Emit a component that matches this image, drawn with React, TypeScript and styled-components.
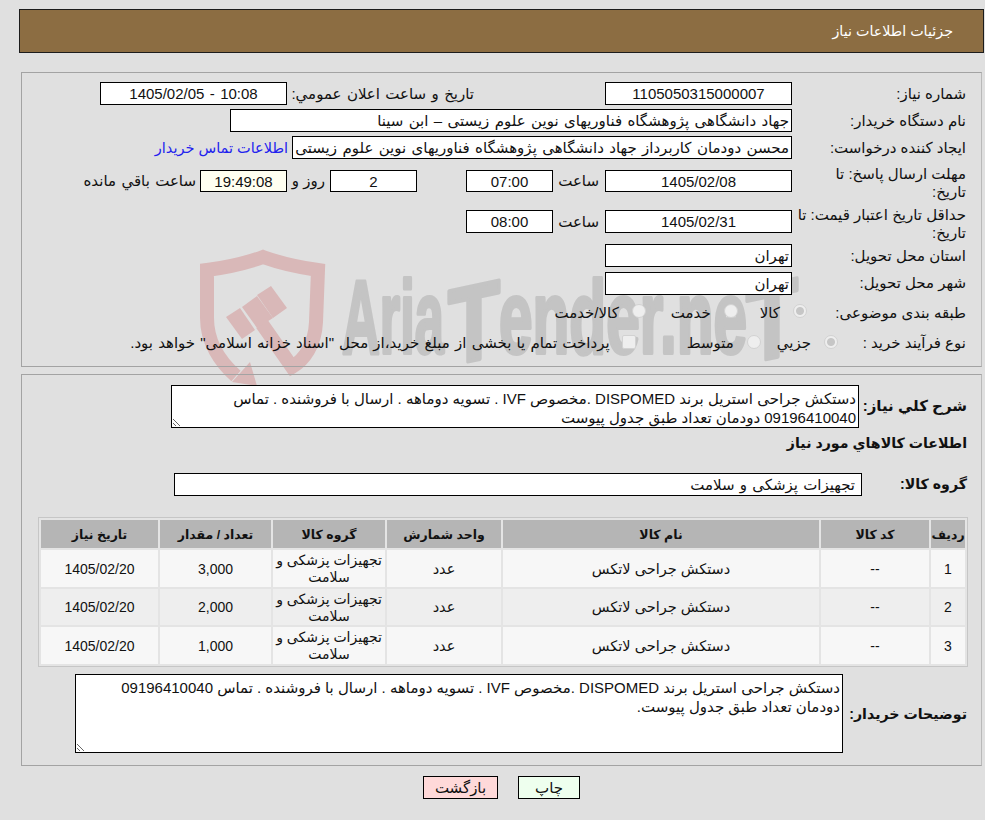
import React from "react";
import styled, { createGlobalStyle } from "styled-components";

const FONT = `"Liberation Sans", "DejaVu Sans", sans-serif`;

const Global = createGlobalStyle`
  html, body { margin: 0; padding: 0; background: #e0e0e0; }
  body { font-family: ${FONT}; font-size: 15px; color: #111; }
`;

const Page = styled.div`
  position: relative;
  width: 985px;
  height: 820px;
  overflow: hidden;
  padding: 9px 1px 0 19px;
  box-sizing: border-box;
  direction: rtl;
`;
const Watermark = styled.svg`
  position: absolute;
  left: 0;
  top: 0;
  pointer-events: none;
`;
const Content = styled.div`
  position: relative;
  z-index: 1;
`;
const Header = styled.h1`
  margin: 0;
  height: 44px;
  box-sizing: border-box;
  border: 1px solid #1c1c1c;
  background: #8c6d42;
  color: #fff;
  font-size: 14.3px;
  font-weight: 400;
  line-height: 43px;
  padding-right: 30px;
`;
const Panel = styled.section<{ $top: number; $height: number; $pt: number }>`
  margin: ${(p) => p.$top}px 2px 0 2px;
  height: ${(p) => p.$height}px;
  box-sizing: border-box;
  border: 1px solid #a3a3a3;
  border-right-color: #b9b9b9;
  padding: ${(p) => p.$pt}px 14px 0 0;
`;
const Row = styled.div<{ $h: number }>`
  display: flex;
  align-items: center;
  height: ${(p) => p.$h}px;
`;
const Label = styled.div<{ $w?: number }>`
  width: ${(p) => p.$w ?? 175}px;
  flex: none;
  line-height: 18px;
  box-sizing: border-box;
  padding: 0 1px 0 6px;
`;
const TwoLineLabel = styled(Label)`
  white-space: nowrap;
  padding-top: 4px;
`;
const Field = styled.div<{ $w: number; $center?: boolean; $cream?: boolean; $mr?: number; $tall?: boolean }>`
  width: ${(p) => p.$w}px;
  height: ${(p) => (p.$tall ? 23 : 22)}px;
  margin-right: ${(p) => p.$mr ?? 0}px;
  flex: none;
  box-sizing: border-box;
  border: 1px solid #000;
  background: ${(p) => (p.$cream ? "#fffff0" : "#fff")};
  line-height: 21px;
  padding: 0 2px;
  text-align: ${(p) => (p.$center ? "center" : "right")};
  white-space: nowrap;
  overflow: hidden;
  word-spacing: 1.2px;
`;
const Ltr = styled.span`
  direction: ltr;
  unicode-bidi: embed;
`;
const Caption = styled.div<{ $w: number; $pr?: number; $tight?: boolean }>`
  width: ${(p) => p.$w}px;
  flex: none;
  box-sizing: border-box;
  padding-right: ${(p) => p.$pr ?? 0}px;
  white-space: nowrap;
  word-spacing: ${(p) => (p.$tight ? 0 : 1.2)}px;
`;
const BuyerLink = styled.a`
  color: #2222ee;
  margin-right: 4px;
  font-size: 14.5px;
  white-space: nowrap;
  text-decoration: none;
`;
const Radio = styled.span<{ $on?: boolean; $gap: number }>`
  width: 14px;
  height: 14px;
  flex: none;
  margin-right: ${(p) => p.$gap}px;
  margin-left: 13px;
  margin-top: -3px;
  box-sizing: border-box;
  border-radius: 50%;
  border: 1px solid #d2d2d2;
  background: ${(p) =>
    p.$on ? "radial-gradient(circle, #c6c6c6 0 3.5px, #eeeeee 4.5px)" : "#eeeeee"};
`;
const Check = styled.span<{ $gap: number }>`
  width: 14px;
  height: 14px;
  flex: none;
  margin-right: ${(p) => p.$gap}px;
  margin-left: 12px;
  margin-top: -3px;
  box-sizing: border-box;
  border-radius: 2px;
  border: 1px solid #d2d2d2;
  background: #eeeeee;
`;
const OptionText = styled.span<{ $spaced?: boolean }>`
  white-space: nowrap;
  word-spacing: ${(p) => (p.$spaced ? 1 : 0)}px;
`;
const BoldLabel = styled.div<{ $w: number; $size?: number }>`
  width: ${(p) => p.$w}px;
  flex: none;
  font-weight: 700;
  font-size: ${(p) => p.$size ?? 14.2}px;
  white-space: nowrap;
`;
const Memo = styled.textarea<{ $w: number; $h: number }>`
  width: ${(p) => p.$w}px;
  height: ${(p) => p.$h}px;
  flex: none;
  box-sizing: border-box;
  border: 1px solid #000;
  border-radius: 0;
  background: #fff;
  color: #111;
  font: 15px/19px ${FONT};
  padding: 3px 2px 0;
  margin: 0;
  direction: rtl;
  resize: both;
  outline: none;
  overflow: hidden;
`;
const SectionTitle = styled.div`
  font-weight: 700;
  font-size: 14.2px;
  height: 29px;
  line-height: 29px;
`;
const GroupBox = styled.div`
  width: 688px;
  height: 23px;
  box-sizing: border-box;
  border: 1px solid #000;
  background: #fff;
  line-height: 21px;
  padding: 0 6px;
  flex: none;
  word-spacing: 1px;
`;
const TableWrap = styled.table`
  margin: 7px -1px 0 0;
  width: 930px;
  table-layout: fixed;
  border-collapse: separate;
  border-spacing: 2px;
  border: 1px solid #c6c6c6;
  background: #e4e4e4;
`;
const HeadCell = styled.th`
  background: #b5b5b5;
  height: 28px;
  padding: 0;
  font-size: 12.5px;
  font-weight: 700;
  text-align: center;
  white-space: nowrap;
`;
const Cell = styled.td<{ $alt: boolean; $h: number; $num?: boolean }>`
  background: ${(p) => (p.$alt ? "#eeeeee" : "#f7f7f7")};
  height: ${(p) => p.$h}px;
  padding: 1px 0 0;
  box-sizing: border-box;
  text-align: center;
  line-height: 17px;
  font-size: ${(p) => (p.$num ? 14 : 14.5)}px;
`;
const BuyerRow = styled.div`
  display: flex;
  align-items: center;
  height: 79px;
  margin-top: 7px;
`;
const Buttons = styled.div`
  display: flex;
  justify-content: center;
  gap: 20px;
  margin-top: 10px;
`;
const Btn = styled.button<{ $bg: string; $w: number }>`
  width: ${(p) => p.$w}px;
  height: 23px;
  box-sizing: border-box;
  border: 1px solid #000;
  border-radius: 0;
  padding: 0;
  background: ${(p) => p.$bg};
  color: #111;
  font: 15px ${FONT};
`;

const WM_GRAY = "#c4c4c4";
const WM_RED = "#d9b8b8";

function WatermarkLogo() {
  return (
    <Watermark width="985" height="820" viewBox="0 0 985 820">
      <path
        d="M236 376 C220 362 207 342 207 318 L207 270 Q238 266 263 257 Q288 266 318 270 L316 322 C315 345 304 360 292 367 L262 324"
        fill="none"
        stroke={WM_RED}
        strokeWidth="14"
      />
      <polygon points="250,362 257,386 232,382" fill={WM_RED} />
      <polygon points="226,317 240,308 255,330 242,339" fill={WM_RED} />
      <polygon points="242,307 257,296 273,318 257,328" fill={WM_RED} />
      <polygon points="257,295 271,286 287,308 273,318" fill={WM_RED} />
      <g
        fill={WM_GRAY}
        stroke={WM_GRAY}
        strokeWidth="4"
        strokeLinejoin="round"
        fontFamily='"Liberation Sans", sans-serif'
        fontWeight="700"
        fontSize="104"
      >
        <text x="342" y="353" textLength="102" lengthAdjust="spacingAndGlyphs" direction="ltr">Aria</text>
        <text x="448" y="356" fontSize="108" textLength="52" lengthAdjust="spacingAndGlyphs" direction="ltr" transform="translate(0 105) skewY(-12)">T</text>
        <text x="499" y="353" textLength="248" lengthAdjust="spacingAndGlyphs" direction="ltr">ender.ne</text>
        <text x="746" y="356" fontSize="108" textLength="52" lengthAdjust="spacingAndGlyphs" direction="ltr" transform="translate(0 166) skewY(-12)">T</text>
      </g>
    </Watermark>
  );
}

const desc =
  "دستكش جراحی استریل برند DISPOMED .مخصوص IVF . تسویه دوماهه . ارسال با فروشنده . تماس 09196410040 دودمان تعداد طبق جدول پیوست";

const columns = [
  { t: "ردیف", w: 34 },
  { t: "کد کالا", w: 108 },
  { t: "نام کالا", w: 316 },
  { t: "واحد شمارش", w: 114 },
  { t: "گروه کالا", w: 112 },
  { t: "تعداد / مقدار", w: 111 },
  { t: "تاریخ نیاز", w: 117 },
];
const rows = [
  { n: "1", q: "3,000", h: 37 },
  { n: "2", q: "2,000", h: 36 },
  { n: "3", q: "1,000", h: 37 },
];

export default function App() {
  return (
    <Page>
      <Global />
      <WatermarkLogo />
      <Content>
        <Header>جزئیات اطلاعات نیاز</Header>
        <Panel $top={19} $height={295} $pt={7}>
          <Row $h={27}>
            <Label>شماره نیاز:</Label>
            <Field $w={187} $center $tall>1105050315000007</Field>
            <Label $w={318}><Caption $w={311} $pr={130}>تاريخ و ساعت اعلان عمومي:</Caption></Label>
            <Field $w={187} $center $tall><Ltr>1405/02/05 - 10:08</Ltr></Field>
          </Row>
          <Row $h={27}>
            <Label>نام دستگاه خریدار:</Label>
            <Field $w={562} $tall>جهاد دانشگاهی پژوهشگاه فناوریهای نوین علوم زیستی – ابن سینا</Field>
          </Row>
          <Row $h={27}>
            <Label>ایجاد کننده درخواست:</Label>
            <Field $w={500} $tall>محسن دودمان کاربرداز جهاد دانشگاهی پژوهشگاه فناوریهای نوین علوم زیستی</Field>
            <BuyerLink>اطلاعات تماس خریدار</BuyerLink>
          </Row>
          <Row $h={40}>
            <TwoLineLabel>مهلت ارسال پاسخ: تا<br />تاریخ:</TwoLineLabel>
            <Field $w={187} $center>1405/02/08</Field>
            <Caption $w={52} $pr={6}>ساعت</Caption>
            <Field $w={87} $center>07:00</Field>
            <Field $w={87} $center $mr={49}>2</Field>
            <Caption $w={43} $pr={5} $tight>روز و</Caption>
            <Field $w={87} $center $cream>19:49:08</Field>
            <Caption $w={120} $pr={4}>ساعت باقي مانده</Caption>
          </Row>
          <Row $h={41}>
            <TwoLineLabel>حداقل تاریخ اعتبار قیمت: تا<br />تاریخ:</TwoLineLabel>
            <Field $w={187} $center $tall>1405/02/31</Field>
            <Caption $w={52} $pr={6}>ساعت</Caption>
            <Field $w={87} $center $tall>08:00</Field>
          </Row>
          <Row $h={27}>
            <Label>استان محل تحویل:</Label>
            <Field $w={187} $tall>تهران</Field>
          </Row>
          <Row $h={28}>
            <Label>شهر محل تحویل:</Label>
            <Field $w={187} $tall>تهران</Field>
          </Row>
          <Row $h={31}>
            <Label $w={160}>طبقه بندی موضوعی:</Label>
            <Radio $on $gap={0} />
            <OptionText>کالا</OptionText>
            <Radio $gap={22} />
            <OptionText>خدمت</OptionText>
            <Radio $gap={25} />
            <OptionText>کالا/خدمت</OptionText>
          </Row>
          <Row $h={30}>
            <Label $w={129}>نوع فرآیند خرید :</Label>
            <Radio $on $gap={0} />
            <OptionText>جزيي</OptionText>
            <Radio $gap={16} />
            <OptionText>متوسط</OptionText>
            <Check $gap={51} />
            <OptionText $spaced>پرداخت تمام یا بخشی از مبلغ خرید،از محل "اسناد خزانه اسلامی" خواهد بود.</OptionText>
          </Row>
        </Panel>
        <Panel $top={7} $height={392} $pt={8}>
          <Row $h={46}>
            <BoldLabel $w={108} $size={15}>شرح كلي نياز:</BoldLabel>
            <Memo $w={688} $h={43} readOnly defaultValue={desc} />
          </Row>
          <SectionTitle>اطلاعات كالاهاي مورد نياز</SectionTitle>
          <Row $h={52}>
            <BoldLabel $w={105}>گروه کالا:</BoldLabel>
            <GroupBox>تجهیزات پزشکی و سلامت</GroupBox>
          </Row>
          <TableWrap>
            <colgroup>
              {columns.map((c) => (
                <col key={c.t} style={{ width: c.w }} />
              ))}
            </colgroup>
            <thead>
              <tr>
                {columns.map((c) => (
                  <HeadCell key={c.t}>{c.t}</HeadCell>
                ))}
              </tr>
            </thead>
            <tbody>
              {rows.map(({ n, q, h }, i) => (
                <tr key={n}>
                  <Cell $alt={i === 1} $h={h} $num>{n}</Cell>
                  <Cell $alt={i === 1} $h={h} $num>--</Cell>
                  <Cell $alt={i === 1} $h={h}>دستکش جراحی لاتکس</Cell>
                  <Cell $alt={i === 1} $h={h}>عدد</Cell>
                  <Cell $alt={i === 1} $h={h} $num>تجهیزات پزشکی و<br />سلامت</Cell>
                  <Cell $alt={i === 1} $h={h} $num>{q}</Cell>
                  <Cell $alt={i === 1} $h={h} $num>1405/02/20</Cell>
                </tr>
              ))}
            </tbody>
          </TableWrap>
          <BuyerRow>
            <BoldLabel $w={124}>توضیحات خریدار:</BoldLabel>
            <Memo
              $w={768}
              $h={79}
              readOnly
              defaultValue="دستكش جراحی استریل برند DISPOMED .مخصوص IVF . تسویه دوماهه . ارسال با فروشنده . تماس 09196410040 دودمان تعداد طبق جدول پیوست."
            />
          </BuyerRow>
        </Panel>
        <Buttons>
          <Btn $bg="#eeffee" $w={62}>چاپ</Btn>
          <Btn $bg="#ffd9d9" $w={75}>بازگشت</Btn>
        </Buttons>
      </Content>
    </Page>
  );
}
